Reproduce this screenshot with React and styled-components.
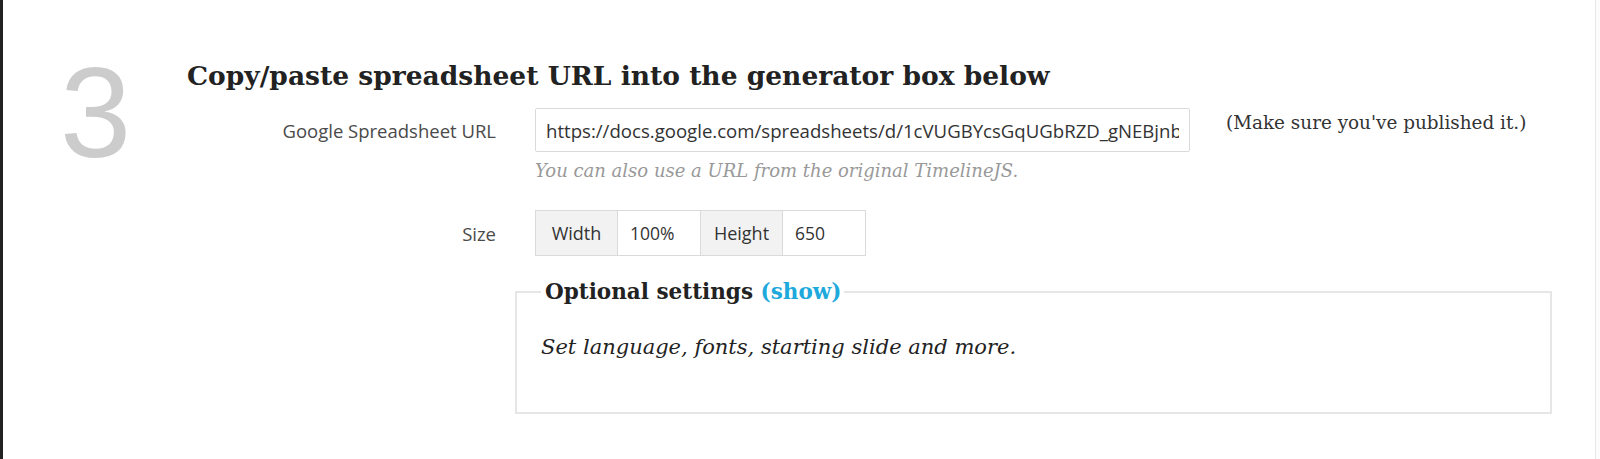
import React from 'react';
import styled, { createGlobalStyle } from 'styled-components';

const GlobalStyle = createGlobalStyle`
  html, body {
    margin: 0;
    padding: 0;
    background: #fff;
  }
  * { box-sizing: border-box; }
`;

const serif = `"DejaVu Serif", "Liberation Serif", serif`;
const sans = `"Open Sans", "Liberation Sans", sans-serif`;

const Page = styled.div`
  display: flex;
  height: 459px;
  overflow: hidden;
  border-left: 3px solid #222;
`;

const Main = styled.div`
  flex: 1;
  padding: 59px 0 0 53px;
`;

const RightGutter = styled.div`
  width: 5px;
  border-left: 1px solid #e8e8e8;
  background: #fcfcfc;
`;

const Step = styled.section`
  display: flex;
  align-items: flex-start;
`;

const StepNumber = styled.div`
  width: 131px;
  padding-left: 4px;
  font-family: "Liberation Sans", Arial, sans-serif;
  font-size: 128px;
  line-height: 1;
  color: #cccccc;
  margin-top: -10px;
`;

const StepBody = styled.div`
  flex: 1;
`;

const Heading = styled.h2`
  margin: 0 0 15px;
  font-family: ${serif};
  font-weight: bold;
  font-size: 26.5px;
  line-height: 34px;
  color: #222;
`;

const Row = styled.div`
  display: flex;
  align-items: ${p => p.$align || 'flex-start'};
  margin-bottom: ${p => p.$mb || 0}px;
`;

const Label = styled.label`
  width: 309px;
  padding-top: ${p => p.$pt || 0}px;
  text-align: right;
  font-family: ${sans};
  font-size: 18.5px;
  color: #4a4a4a;
`;

const Controls = styled.div`
  margin-left: 39px;
`;

const UrlInput = styled.input`
  display: block;
  width: 655px;
  height: 44px;
  padding: 0 10px;
  border: 1px solid #dadada;
  border-radius: 2px;
  font-family: ${sans};
  font-size: 18.6px;
  color: #333;
  outline: none;
`;

const Help = styled.p`
  margin: 8px 0 0;
  font-family: ${serif};
  font-style: italic;
  font-size: 18px;
  color: #999;
`;

const Aside = styled.span`
  margin-left: 36px;
  padding-top: 4px;
  font-family: ${serif};
  font-size: 18.4px;
  color: #333;
`;

const InputGroup = styled.div`
  display: flex;
  height: 46px;
`;

const Addon = styled.span`
  display: flex;
  align-items: center;
  justify-content: center;
  width: 83px;
  background: #f2f2f2;
  border: 1px solid #dadada;
  margin-left: ${p => (p.$first ? 0 : -1)}px;
  font-family: ${sans};
  font-size: 18px;
  color: #333;
`;

const SmallInput = styled.input`
  width: 84px;
  margin-left: -1px;
  padding: 0 12px;
  border: 1px solid #dadada;
  font-family: ${sans};
  font-size: 17.5px;
  color: #333;
  outline: none;
`;

const Fieldset = styled.fieldset`
  width: 1037px;
  height: 135px;
  margin: 23px 0 0 459px;
  padding: 31px 24px 0;
  border: 2px solid #e6e6e6;
`;

const Legend = styled.legend`
  padding: 0 3px 0 4px;
  font-family: ${serif};
  font-weight: bold;
  font-size: 21.5px;
  color: #222;
`;

const ShowLink = styled.a`
  color: #1ea9dc;
  text-decoration: none;
  cursor: pointer;
`;

const Note = styled.p`
  margin: 0;
  font-family: ${serif};
  font-style: italic;
  font-size: 21px;
  color: #222;
`;

export default function App() {
  return (
    <>
      <GlobalStyle />
      <Page>
        <Main>
          <Step>
            <StepNumber>3</StepNumber>
            <StepBody>
              <Heading>Copy/paste spreadsheet URL into the generator box below</Heading>
              <Row $mb={29}>
                <Label $pt={10}>Google Spreadsheet URL</Label>
                <Controls>
                  <UrlInput
                    readOnly
                    value="https://docs.google.com/spreadsheets/d/1cVUGBYcsGqUGbRZD_gNEBjnbCW7XzdvhWjdmeyISk0w/pubhtml"
                  />
                  <Help>You can also use a URL from the original TimelineJS.</Help>
                </Controls>
                <Aside>(Make sure you've published it.)</Aside>
              </Row>
              <Row $align="center">
                <Label>Size</Label>
                <Controls>
                  <InputGroup>
                    <Addon $first>Width</Addon>
                    <SmallInput readOnly value="100%" />
                    <Addon>Height</Addon>
                    <SmallInput readOnly value="650" />
                  </InputGroup>
                </Controls>
              </Row>
            </StepBody>
          </Step>
          <Fieldset>
            <Legend>
              Optional settings <ShowLink>(show)</ShowLink>
            </Legend>
            <Note>Set language, fonts, starting slide and more.</Note>
          </Fieldset>
        </Main>
        <RightGutter />
      </Page>
    </>
  );
}
